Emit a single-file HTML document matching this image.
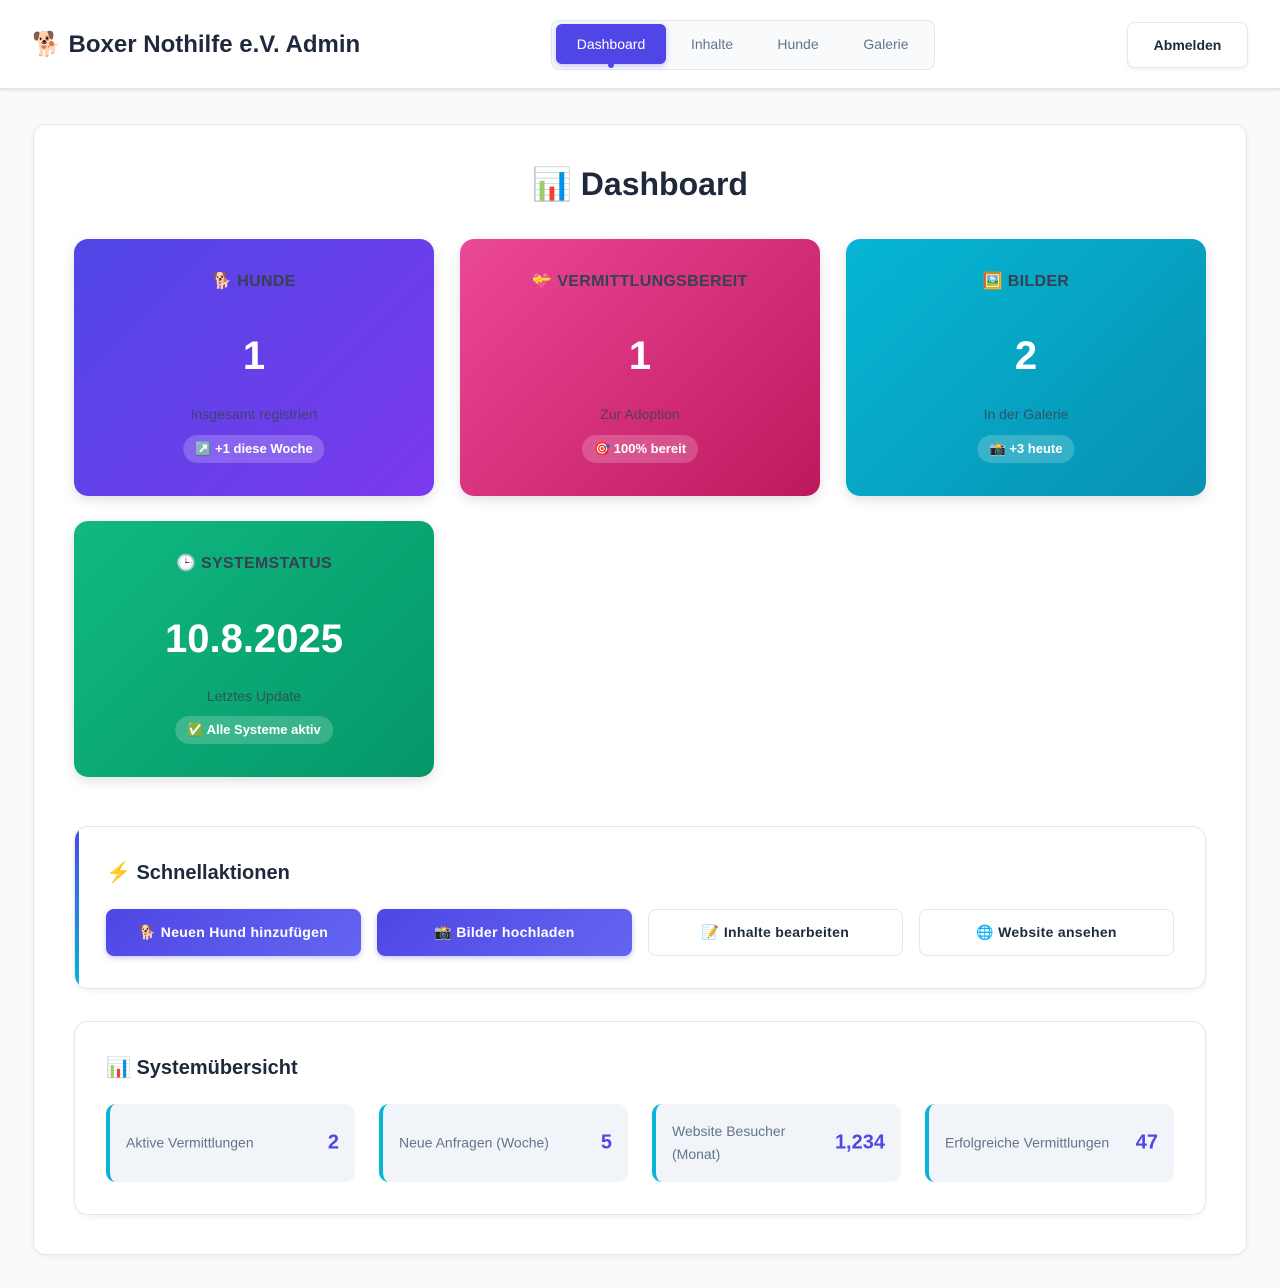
<!DOCTYPE html>
<html><head><meta charset="utf-8"><style>
*{box-sizing:border-box;margin:0;padding:0}
body{width:1280px;height:1288px;background:#f8fafc;font-family:"Liberation Sans","Noto Sans CJK SC",sans-serif;color:#1e293b;position:relative;overflow:hidden}
.hdr{position:absolute;left:0;top:0;width:1280px;height:90px;background:#fff;border-bottom:2px solid #e2e8f0;box-shadow:0 1px 4px rgba(0,0,0,.05)}
.logo{position:absolute;left:32px;top:30px;font-size:24px;font-weight:bold;color:#1e293b}
.nav{position:absolute;left:551px;top:20px;width:384px;height:50px;border:1px solid #e2e8f0;border-radius:8px;background:#f8fafc}
.nav span{position:absolute;top:3px;height:40px;line-height:40px;font-size:14px;color:#64748b;text-align:center}
.nav .act{left:4px;width:110px;background:#4f46e5;color:#fff;border-radius:6px;box-shadow:0 2px 6px rgba(79,70,229,.3)}
.nav .act:after{content:"";position:absolute;left:52px;bottom:-4px;width:6px;height:6px;border-radius:3px;background:#4f46e5}
.out{position:absolute;left:1127px;top:22px;width:121px;height:46px;border:1px solid #e2e8f0;border-radius:8px;background:#fff;font-size:14px;font-weight:bold;line-height:44px;text-align:center;box-shadow:0 2px 4px rgba(0,0,0,.06)}
.main{position:absolute;left:33px;top:124px;width:1214px;height:1131px;background:#fff;border:1px solid #e2e8f0;border-radius:12px;box-shadow:0 2px 6px rgba(0,0,0,.05)}
h1{position:absolute;left:0;top:165px;width:1280px;text-align:center;font-size:32px;font-weight:bold;color:#1e293b}
.card{position:absolute;width:360px;border-radius:14px;text-align:center;box-shadow:0 4px 12px rgba(0,0,0,.12)}
.card .lb{position:absolute;top:32px;width:100%;font-size:16px;font-weight:bold;color:#374151;letter-spacing:.3px}
.card .n{position:absolute;top:95px;width:100%;font-size:40px;font-weight:bold;color:#fff}
.card .s{position:absolute;top:167px;width:100%;font-size:14px;color:rgba(55,65,81,.8)}
.card .b{position:absolute;top:196px;left:50%;transform:translateX(-50%);height:28px;line-height:28px;padding:0 12px;border-radius:14px;background:rgba(255,255,255,.2);color:#fff;font-size:13px;font-weight:bold;white-space:nowrap}
.sec{position:absolute;left:74px;width:1132px;background:#fff;border:1px solid #e2e8f0;border-radius:14px;box-shadow:0 2px 6px rgba(0,0,0,.06)}
.sec h2{position:absolute;left:31px;font-size:20px;font-weight:bold;color:#1e293b}
.btn{position:absolute;top:82px;width:255px;height:47px;border-radius:8px;font-size:14px;font-weight:bold;line-height:47px;text-align:center;letter-spacing:.3px}
.pr{background:linear-gradient(135deg,#4f46e5,#6366f1);color:#fff;box-shadow:0 2px 6px rgba(79,70,229,.3)}
.sc{background:#fff;border:1px solid #e2e8f0;color:#1e293b;line-height:45px}
.it{position:absolute;top:82px;width:249px;height:78px;background:#f1f5f9;border-left:4px solid #06b6d4;border-radius:10px;font-size:14px;color:#64748b}
.it .l{position:absolute;left:16px;top:50%;transform:translateY(-50%);line-height:23px}
.it .v{position:absolute;right:16px;top:50%;transform:translateY(-50%);font-size:20px;font-weight:bold;color:#4f46e5}
</style></head><body>
<div class="hdr">
<div class="logo">🐕 Boxer Nothilfe e.V. Admin</div>
<div class="nav"><span class="act">Dashboard</span><span style="left:114px;width:92px">Inhalte</span><span style="left:202px;width:88px">Hunde</span><span style="left:292px;width:84px">Galerie</span></div>
<div class="out">Abmelden</div>
</div>
<div class="main"></div>
<h1>📊 Dashboard</h1>
<div class="card" style="left:74px;top:239px;height:257px;background:linear-gradient(135deg,#4f46e5,#7c3aed)"><div class="lb">🐕 HUNDE</div><div class="n">1</div><div class="s">Insgesamt registriert</div><div class="b">↗️ +1 diese Woche</div></div>
<div class="card" style="left:460px;top:239px;height:257px;background:linear-gradient(135deg,#ec4899,#be185d)"><div class="lb">💝 VERMITTLUNGSBEREIT</div><div class="n">1</div><div class="s">Zur Adoption</div><div class="b">🎯 100% bereit</div></div>
<div class="card" style="left:846px;top:239px;height:257px;background:linear-gradient(135deg,#06b6d4,#0891b2)"><div class="lb">🖼️ BILDER</div><div class="n">2</div><div class="s">In der Galerie</div><div class="b">📸 +3 heute</div></div>
<div class="card" style="left:74px;top:521px;height:256px;background:linear-gradient(135deg,#10b981,#059669)"><div class="lb">🕒 SYSTEMSTATUS</div><div class="n" style="top:96px">10.8.2025</div><div class="s">Letztes Update</div><div class="b" style="top:195px">✅ Alle Systeme aktiv</div></div>
<div class="sec" style="top:826px;height:163px;overflow:hidden">
<div style="position:absolute;left:0;top:0;width:4px;height:100%;background:linear-gradient(#4f46e5,#06b6d4)"></div>
<h2 style="top:33px">⚡ Schnellaktionen</h2>
<div class="btn pr" style="left:31px">🐕 Neuen Hund hinzufügen</div>
<div class="btn pr" style="left:302px">📸 Bilder hochladen</div>
<div class="btn sc" style="left:573px">📝 Inhalte bearbeiten</div>
<div class="btn sc" style="left:844px">🌐 Website ansehen</div>
</div>
<div class="sec" style="top:1021px;height:194px">
<h2 style="top:33px">📊 Systemübersicht</h2>
<div class="it" style="left:31px"><div class="l">Aktive Vermittlungen</div><div class="v">2</div></div>
<div class="it" style="left:304px"><div class="l">Neue Anfragen (Woche)</div><div class="v">5</div></div>
<div class="it" style="left:577px"><div class="l">Website Besucher<br>(Monat)</div><div class="v">1,234</div></div>
<div class="it" style="left:850px"><div class="l">Erfolgreiche Vermittlungen</div><div class="v">47</div></div>
</div>
</body></html>
